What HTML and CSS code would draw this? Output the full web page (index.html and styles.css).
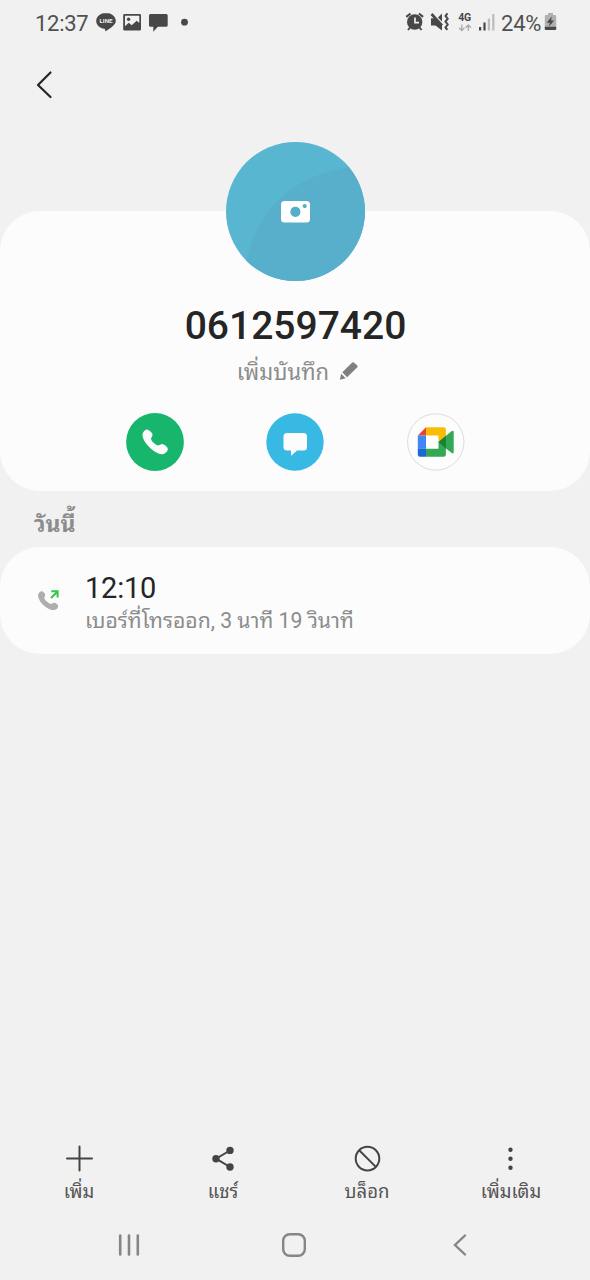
FILE: index.html
```html
<!DOCTYPE html>
<html lang="th">
<head>
<meta charset="utf-8">
<title>0612597420</title>
<link rel="stylesheet" href="styles.css">
</head>
<body>
<div class="screen">
  <div class="status">
    <span class="clock">12:37</span>
    <svg class="notifications" width="96" height="24" viewBox="94 10 96 24">
      <path fill="#484848" d="M106 13c-5.400 0-9.800 3.500-9.800 7.900 0 3.900 3.500 7.200 8.200 7.800.8.200.8.700.7 2.500 3-1.400 10.700-5.800 10.700-10.300 0-4.400-4.400-7.900-9.800-7.900z"/>
      <text class="line-label" x="106" y="23.300" text-anchor="middle" textLength="13" lengthAdjust="spacingAndGlyphs">LINE</text>
      <path fill="#484848" fill-rule="evenodd" d="M124.500 14h15.200q1.300 0 1.300 1.300v14q0 1.300-1.300 1.300h-15.200q-1.300 0-1.300-1.300v-14q0-1.300 1.300-1.300zM125 15.800v10.500l3.700-3.500 3 2.500 5-4.500 2.600 2.300v-7.300z"/>
      <circle cx="128.600" cy="19.300" r="1.700" fill="#484848"/>
      <path fill="#484848" d="M150.500 14h15.700q1.500 0 1.500 1.500v9.800q0 1.500-1.500 1.500h-8.300l-4.600 4.900v-4.900h-2.800q-1.500 0-1.500-1.500v-9.800q0-1.500 1.500-1.500z"/>
      <circle cx="184.500" cy="22.200" r="3.400" fill="#484848"/>
    </svg>
    <svg class="indicators" width="92" height="24" viewBox="404 10 92 24">
      <circle cx="414.700" cy="22" r="7.700" fill="#484848"/>
      <g fill="none" stroke="#484848" stroke-width="2"><path d="M406.300 16.900l4.200-3.400M418.900 13.500l4.200 3.400M410 27.500l-2 2.500M419.500 27.500l2 2.500"/></g>
      <path d="M415 17.600v5h4" fill="none" stroke="#f1f1f1" stroke-width="1.700"/>
      <path fill="#484848" d="M431 18.300h3.500l7.500 6.500v5.700l-6.500-5h-4.500zM438 17.500l4-4v8z"/>
      <path d="M431.500 14l10.500 11.500" stroke="#484848" stroke-width="2.600"/>
      <path d="M447.500 13.300l-2 2.600 2.200 2.800-2.200 2.900 2.200 2.900-2.200 2.900 1.800 2.500" fill="none" stroke="#484848" stroke-width="2"/>
      <text class="net-label" x="458.200" y="21" textLength="13">4G</text>
      <path d="M461.800 24.500v6m-2.700-2.700l2.700 2.700 2.700-2.700M468.300 31v-6m-2.700 2.700l2.700-2.700 2.700 2.700" fill="none" stroke="#aaa" stroke-width="1.300"/>
      <path fill="#484848" d="M479 27h2.200v3.500H479zM483.400 22.500h2.200v8h-2.200z"/>
      <path fill="#bcbcbc" d="M487.800 18.500h2.200v12h-2.200zM492.200 14h2.200v16.500h-2.200z"/>
    </svg>
    <span class="battery-level">24%</span>
    <svg class="battery" width="13" height="20" viewBox="0 0 13 20">
      <path fill="#b0b0b0" d="M4 1h5v2h2q1.200 0 1.200 1.200V18H.8V4.200Q.8 3 2 3h2z"/>
      <path fill="#484848" d="M.8 14.800h11.400v1.900q0 1.300-1.300 1.300H2.100Q.8 18 .8 16.700zM7.700 4.500L2.800 10.700h3L5 14.500l5.200-5.900H7.100z"/>
    </svg>
  </div>

  <div class="topbar">
    <svg width="18" height="30" viewBox="0 0 18 30"><path d="M14.500 2.500L2 15l12.500 12" fill="none" stroke="#252525" stroke-width="2.200" stroke-linecap="round" stroke-linejoin="round"/></svg>
  </div>

  <div class="card contact">
    <svg class="avatar" width="140" height="140" viewBox="0 0 140 140">
      <defs><clipPath id="disc"><circle cx="70.500" cy="69.500" r="69.500"/></clipPath></defs>
      <circle cx="70.500" cy="69.500" r="69.500" fill="#58b6d0"/>
      <path clip-path="url(#disc)" fill="#58afcc" d="M20 124C31 70 64 34 125 25L150 50V145H20z"/>
      <rect x="56" y="59" width="29" height="21.500" rx="3.500" fill="#fff"/>
      <circle cx="70.400" cy="69.800" r="5.100" fill="#52aecb"/>
      <circle cx="79.700" cy="64.100" r="2.100" fill="#52aecb"/>
    </svg>
    <div class="number">0612597420</div>
    <div class="note">
      <span>เพิ่มบันทึก</span>
      <svg width="20" height="20" viewBox="0 0 20 20"><path fill="#808080" d="M3.300 11.300L13.200 1.600q.8-.8 1.600 0l3.500 3q.8.800 0 1.600L8.100 16.200zM2.200 12.700l4.500 4.500L.8 18.800z"/></svg>
    </div>
    <div class="actions">
      <svg width="58" height="58" viewBox="0 0 58 58"><circle cx="29" cy="29" r="28.900" fill="#18b66d"/><path fill="#fcfcfc" d="M16.700 20.500C17.500 18.300 20 16 21.700 16.700c2 .7 4.600 3 4.800 4.600.3 2-1.800 3.400-1.400 5 .7 2.300 4.600 5.900 7.200 6.100 1.500 0 2.800-1.700 4.600-1.200 2 .6 4.900 2.900 4.900 4.800 0 2.400-3 5-5.200 5.200C29.500 42 14.500 28 16.700 20.500z"/></svg>
      <svg width="58" height="58" viewBox="0 0 58 58"><circle cx="29" cy="29" r="28.700" fill="#38b9e4"/><path fill="#fcfcfc" d="M21 20h16.500q3.500 0 3.500 3.500v10.500q0 3.500-3.500 3.500H31l-5.200 4.800q-.8.700-.8-.5V37.500h-4q-3.500 0-3.500-3.500V23.500q0-3.500 3.500-3.500z"/></svg>
      <svg width="58" height="58" viewBox="0 0 58 58">
        <circle cx="28.800" cy="29" r="28.200" fill="#fdfdfd" stroke="#dcdbe0"/>
        <path fill="#fff" d="M19 22h14v15H19z"/>
        <path fill="#e94335" d="M10.800 22.500l8.200-8.200v8.200z"/>
        <path fill="#4285f4" d="M10.800 22.500H19v13.300h-8.200z"/>
        <path fill="#1967d2" d="M10.800 35.800H19v8h-6q-2.200 0-2.200-2.200z"/>
        <path fill="#fbbc04" d="M19 14.300h17.600q2.300 0 2.300 2.300v6.400L31.500 29v-6.500H19z"/>
        <path fill="#34a853" d="M19 35.800h12.500V29l13-10.700q2.200-1.600 2.200.8V39q0 2.400-2.200.8l-5.600-4.300v6q0 2.300-2.300 2.300H19z"/>
        <path fill="#188038" d="M31.500 29l7.400-6.300v12.800z"/>
      </svg>
    </div>
  </div>

  <div class="day">วันนี้</div>

  <div class="card entry">
    <svg class="entry-icon" width="26" height="26" viewBox="0 0 26 26">
      <path fill="#aeaeae" d="M1.200 8.500C1.800 6.300 4 4.700 5.600 5.500c1.600.8 2.600 2.100 2.600 3.400.1 1.300-1.200 2.100-.9 3.400.6 2.100 4.600 5.500 6.700 5.600 1.200 0 2.200-1.500 3.600-1.200 1.500.3 3.500 1.800 3.600 3.200.1 1.900-1.900 3.800-3.700 4.100C10.500 25 0 14.500 1.200 8.500z"/>
      <path d="M14 12l6.300-6.300M14.300 5.300h6.300v6.200" fill="none" stroke="#2fc84a" stroke-width="2"/>
    </svg>
    <div class="entry-text">
      <div class="time">12:10</div>
      <div class="detail">เบอร์ที่โทรออก, 3 นาที 19 วินาที</div>
    </div>
  </div>

  <div class="toolbar">
    <div class="tool"><svg width="28" height="28" viewBox="0 0 28 28"><path d="M14.500 1.500v24M2 13.500h25" stroke="#444" stroke-width="2" stroke-linecap="round"/></svg><span>เพิ่ม</span></div>
    <div class="tool"><svg width="28" height="28" viewBox="0 0 28 28"><path d="M21 5.500L7 13.700 21 22" fill="none" stroke="#444" stroke-width="2"/><g fill="#444"><circle cx="21" cy="5.400" r="3.700"/><circle cx="7" cy="13.700" r="3.700"/><circle cx="21" cy="22" r="3.700"/></g></svg><span>แชร์</span></div>
    <div class="tool"><svg width="28" height="28" viewBox="0 0 28 28"><g fill="none" stroke="#444" stroke-width="2"><circle cx="14.500" cy="13.600" r="11.800"/><path d="M6.200 5.300l16.600 16.600"/></g></svg><span>บล็อก</span></div>
    <div class="tool"><svg width="28" height="28" viewBox="0 0 28 28"><g fill="#444"><circle cx="13.500" cy="4.700" r="2.200"/><circle cx="13.500" cy="13.700" r="2.200"/><circle cx="13.500" cy="22.700" r="2.200"/></g></svg><span>เพิ่มเติม</span></div>
  </div>

  <div class="navbar">
    <svg width="24" height="24" viewBox="0 0 24 24"><path d="M3.200 2.500v19M12 2.500v19M20.800 2.500v19" stroke="#858585" stroke-width="2.600" stroke-linecap="round"/></svg>
    <svg class="home" width="26" height="26" viewBox="0 0 26 26"><rect x="2.200" y="2.200" width="21.600" height="21.600" rx="6.500" fill="none" stroke="#858585" stroke-width="2.400"/></svg>
    <svg width="16" height="24" viewBox="0 0 16 24"><path d="M12 2.500L2 12l10 9.500" fill="none" stroke="#858585" stroke-width="2.400" stroke-linecap="round"/></svg>
  </div>
</div>
</body>
</html>
```
FILE: styles.css
```css
* { box-sizing: border-box; }
body {
  margin: 0;
  background: #f1f1f1;
  font-family: Roboto, "Noto Sans Thai Looped", "Droid Sans Thai", Loma, Waree, Garuda, sans-serif;
  color: #252525;
}
svg { display: block; flex: none; }
.screen { width: 590px; height: 1280px; display: flex; flex-direction: column; overflow: hidden; }
.status { height: 46px; flex: none; display: flex; align-items: center; padding: 0 33px 2px 35px; color: #505050; font-size: 22px; white-space: nowrap; }
.clock { width: 59px; letter-spacing: -.3px; padding-top: 2px; }
.line-label { font: bold 5.500px Roboto, sans-serif; fill: #f1f1f1; }
.net-label { font: bold 10.500px Roboto, sans-serif; fill: #484848; }
.indicators { margin-left: auto; }
.battery-level { width: 43px; margin-left: 5px; padding-top: 2px; letter-spacing: -.2px; }
.topbar { height: 165px; flex: none; padding: 24px 36px; }
.card { background: #fcfcfc; border-radius: 40px; flex: none; }
.contact { height: 280px; display: flex; flex-direction: column; align-items: center; }
.avatar { margin-top: -69px; }
.number { height: 48px; margin-top: 20px; line-height: 48px; font-size: 39px; font-weight: 500; padding-left: 1px; }
.note { display: flex; align-items: center; gap: 10px; height: 28px; margin-top: 7px; font-size: 22px; line-height: 28px; color: #8c8c8c; padding-left: 6px; }
.note span { padding-top: 3px; }
.actions { display: flex; gap: 82.500px; margin-top: 28px; }
.day { height: 56px; flex: none; padding: 19px 34px 0; line-height: 30px; font-size: 23px; font-weight: 700; color: #8c8c8c; }
.entry { height: 107px; display: flex; padding: 25px 37px 0; }
.entry-icon { margin-top: 14px; }
.entry-text { margin-left: 22px; }
.time { font-size: 29px; line-height: 33px; letter-spacing: -.2px; }
.detail { font-size: 21.200px; line-height: 32px; color: #8c8c8c; white-space: nowrap; }
.toolbar { height: 70px; flex: none; margin-top: auto; padding: 0 7px; display: grid; grid-template-columns: repeat(4, 1fr); }
.tool { display: flex; flex-direction: column; align-items: center; gap: 6px; font-size: 18.500px; line-height: 26px; color: #555; }
.navbar { height: 65px; flex: none; display: flex; justify-content: space-between; align-items: center; padding: 0 121px 5px 117px; }
.home { margin-right: 6px; }
```
